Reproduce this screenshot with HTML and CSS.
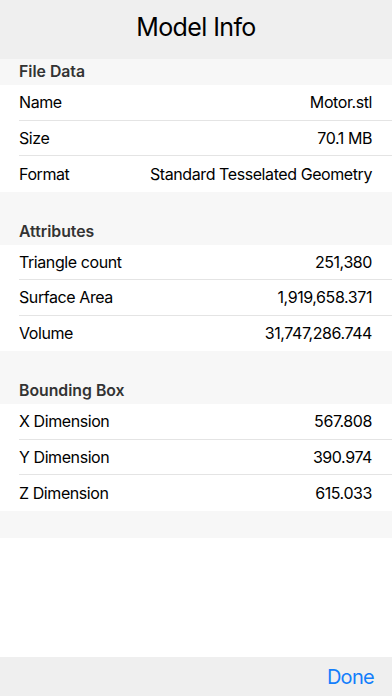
FILE: index.html
```html
<!DOCTYPE html>
<html>
<head lang="en">
    <meta charset="UTF-8">
    <title>Model Info</title>
    <link rel="stylesheet" href="styles.css">
</head>
<body>
<div id="screen">
    <div id="title-bar">Model Info</div>
    <div id="table">
        <div class="section-head first">File Data</div>
        <ul class="rows">
            <li><span>Name</span><span>Motor.stl</span></li>
            <li><span>Size</span><span>70.1 MB</span></li>
            <li><span>Format</span><span>Standard Tesselated Geometry</span></li>
        </ul>
        <div class="section-head">Attributes</div>
        <ul class="rows">
            <li><span>Triangle count</span><span>251,380</span></li>
            <li><span>Surface Area</span><span>1,919,658.371</span></li>
            <li><span>Volume</span><span>31,747,286.744</span></li>
        </ul>
        <div class="section-head">Bounding Box</div>
        <ul class="rows">
            <li><span>X Dimension</span><span>567.808</span></li>
            <li><span>Y Dimension</span><span>390.974</span></li>
            <li><span>Z Dimension</span><span>615.033</span></li>
        </ul>
        <div class="section-foot"></div>
    </div>
    <div id="tool-bar">
        <span id="done">Done</span>
    </div>
</div>
</body>
</html>
```

FILE: styles.css
```css
* {
    padding: 0;
    margin: 0;
    box-sizing: border-box;
}

ul, ol {
    list-style: none;
}

body {
    font-family: Inter, "Noto Sans", sans-serif;
    color: #000;
    background: #fff;
}

#screen {
    width: 392px;
    height: 696px;
    display: flex;
    flex-direction: column;
}

#title-bar {
    height: 59px;
    background: #efefef;
    font-size: 25px;
    letter-spacing: -0.6px;
    text-align: center;
    line-height: 54px;
}

#table {
    flex: 1;
}

.section-head {
    height: 53px;
    padding: 0 19px 4px;
    background: #f7f7f7;
    font-size: 15.8px;
    font-weight: 600;
    color: #333;
    display: flex;
    align-items: flex-end;
}

.section-head.first {
    height: 26px;
}

.rows li {
    height: 35.5px;
    margin-left: 19px;
    padding-right: 20px;
    display: flex;
    justify-content: space-between;
    align-items: center;
    font-size: 16px;
    letter-spacing: -0.42px;
    border-bottom: 1px solid #e4e4e4;
}

.rows li:last-child {
    border-bottom: none;
}

.section-foot {
    height: 27px;
    background: #f7f7f7;
}

#tool-bar {
    height: 39px;
    background: #efefef;
    display: flex;
    justify-content: flex-end;
    align-items: center;
    padding-right: 18px;
}

#done {
    color: #147efb;
    font-size: 20px;
    letter-spacing: -0.7px;
    cursor: pointer;
}
```
